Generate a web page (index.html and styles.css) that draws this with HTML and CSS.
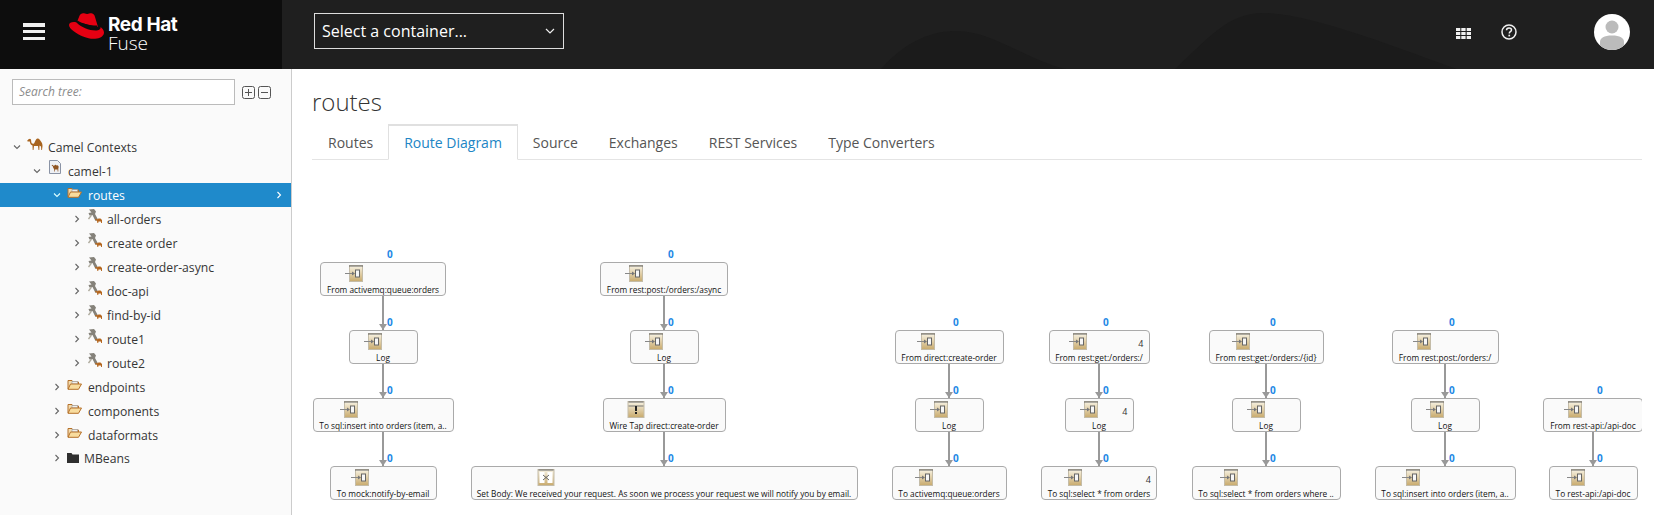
FILE: index.html
```html
<!DOCTYPE html>
<html lang="en">
  <head>
    <meta charset="UTF-8" />
    <title>Red Hat Fuse</title>
    <link rel="stylesheet" href="styles.css">
  </head>
  <body>
    <svg class="defs" width="0" height="0">
      <defs>
        <linearGradient id="gold" x1="0" y1="0" x2="0" y2="1">
          <stop offset="0" stop-color="#f8f3e4"/>
          <stop offset="1" stop-color="#c8aa6c"/>
        </linearGradient>
        <symbol id="i-endpoint" viewBox="0 0 18 17">
          <rect x="4.500" y="0.500" width="13" height="16" fill="url(#gold)" stroke="#c4bca8"/>
          <path d="M4 1h14" stroke="#666" stroke-width="1"/>
          <path d="M0 8.500h9" stroke="#888" stroke-width="1"/>
          <path d="M7 6.500l3 2-3 2z" fill="#777"/>
          <rect x="10.500" y="5" width="4" height="7" fill="#f7f7f7" stroke="#666" stroke-width="1"/>
        </symbol>
        <symbol id="i-wiretap" viewBox="0 0 17 17">
          <rect x="0.500" y="0.500" width="16" height="16" fill="url(#gold)" stroke="#c4bca8"/>
          <path d="M1 1h15" stroke="#666"/>
          <path d="M1 5h15" stroke="#777"/>
          <path d="M8.500 5v5" stroke="#222" stroke-width="2"/>
          <rect x="7.500" y="11" width="2" height="2" fill="#222"/>
        </symbol>
        <symbol id="i-setbody" viewBox="0 0 17 17">
          <rect x="0.500" y="0.500" width="16" height="16" fill="url(#gold)" stroke="#c4bca8"/>
          <path d="M1 1h15" stroke="#666"/>
          <rect x="2" y="3" width="5" height="11" fill="#fff"/>
          <rect x="10" y="3" width="5" height="11" fill="#fff"/>
          <path d="M5.500 6l6 5M11.500 6l-6 5" stroke="#666" stroke-width="1"/>
        </symbol>
        <symbol id="i-camel" viewBox="0 0 16 12">
          <path d="M0 3L1.500 1.200 3 .8 4 1.500 4.300 4C4.500 5.500 5.500 6 7 5.500 8 4.500 8.500 1 10.500.5 12 .2 13 2 14 3.500 15 5 15.500 6 15.500 8L15 12H14.300L14 8.500 12.500 7.500 12.300 12H11.500L11 8H7L6.500 12H5.700L5.500 7.500C4 7 3 6 2.800 3.500H1z" fill="#a8641f"/>
        </symbol>
        <symbol id="i-doc" viewBox="0 0 12 14">
          <path d="M.5.500h8l3 3v10H.5z" fill="#eef0f4" stroke="#8a93a5"/>
          <path d="M2.500 5.500l1.500-.8.500 1.300c.7.200 1.100-1.300 1.900-1.300.5 0 .6.700 1 .7.700-.3 1.600-.2 2 .6.400.7.200 2-.1 2.800v2.600h-.7V9.500H5.700v2.100H5V9C4.300 8.300 4 7.200 3.800 6.300z" fill="#8f5522"/>
        </symbol>
        <symbol id="i-folder" viewBox="0 0 15 11">
          <path d="M1 10V1.500h4l1 1.500h5.500V5" fill="#f3dcae" stroke="#b5702a"/>
          <rect x="5" y="2.500" width="5.500" height="2.500" fill="#eee" stroke="#999" stroke-width=".6"/>
          <path d="M1 10.300L3.500 5h11l-3 5.300z" fill="#f8dc9e" stroke="#b5702a"/>
        </symbol>
        <symbol id="i-route" viewBox="0 0 14 14">
          <path d="M1 .5L6 0 8 2.500 7 5 10 10.500 7.500 12 4.500 6 1.500 6.500 .5 4 3.500 3.500z" fill="#85827a"/>
          <path d="M0.500 10L3.500 6" stroke="#b0ac9f" stroke-width="1.400"/>
          <path d="M7 10.500L8 9.500 9 10.500 10.500 9.500 12.500 9.500 14 11V14H13.200L12.800 12.500H10.500L10.200 14H9.400L9 12 8 11.200z" fill="#b5671f"/>
        </symbol>
        <symbol id="i-blackfolder" viewBox="0 0 12 10">
          <path d="M0 10V0h4.500l1 1.500H12V10z" fill="#2f2f2f"/>
        </symbol>
        <symbol id="c-down" viewBox="0 0 10 10"><path d="M2 3.500l3 3 3-3" fill="none" stroke="currentColor" stroke-width="1.100"/></symbol>
        <symbol id="c-right" viewBox="0 0 10 10"><path d="M3.500 2l3 3-3 3" fill="none" stroke="currentColor" stroke-width="1.100"/></symbol>
      </defs>
    </svg>

    <header class="topbar">
      <div class="brand">
        <button class="burger"><span></span><span></span><span></span></button>
        <svg class="hat" viewBox="0 0 36 26">
          <path d="M8 9L10.500 2.800C11.200 .8 13 0 15 .3L18 1C19.500 1.200 20.500 .2 22.500 .3 24.500 .5 25.500 2 26 4L29 14z" fill="#e60012"/>
          <path d="M8.500 7.500C13 10.500 21 13 28 12.500L29 15.500C22 16.500 12 13.500 7.500 10z" fill="#0d0d0d"/>
          <path d="M7.500 9.500C4 8.500 0 9.500 0 12 0 16 8 21 14 23.500 20 26 24 26 28 25.500 32 25 35 22.500 35 19.500 35 17 33 15 31.500 14 32 16 30 17.500 26.500 17.500 20 17.500 12 14 7.500 9.500z" fill="#e60012"/>
        </svg>
        <div class="brand-text">
          <div class="brand-name">Red Hat</div>
          <div class="brand-product">Fuse</div>
        </div>
      </div>
      <div class="topbar-main">
        <svg class="topbar-bg" viewBox="0 0 1372 69" preserveAspectRatio="none">
          <path d="M599 69C625 40 650 31 675 31 710 31 745 60 784 69z" fill="#1b1b1b"/>
          <path d="M893 69C925 40 945 13 981 13 1030 13 1120 50 1175 69z" fill="#1b1b1b"/>
        </svg>
        <div class="container-select">
          <span>Select a container...</span>
          <svg class="select-caret" viewBox="0 0 10 6"><path d="M1 1l4 4 4-4" fill="none" stroke="#eee" stroke-width="1.200"/></svg>
        </div>
        <div class="topbar-tools">
          <svg class="grid-icon" viewBox="0 0 15 11">
            <path d="M0 0h4.300v3H0zM5.300 0h4.300v3H5.300zM10.700 0H15v3h-4.300zM0 4h4.300v3H0zM5.300 4h4.300v3H5.300zM10.700 4H15v3h-4.300zM0 8h4.300v3H0zM5.300 8h4.300v3H5.300zM10.700 8H15v3h-4.300z" fill="#f0f0f0"/>
          </svg>
          <svg class="help-icon" viewBox="0 0 16 16">
            <circle cx="8" cy="8" r="7" fill="none" stroke="#f0f0f0" stroke-width="1.500"/>
            <path d="M5.500 6.200c0-1.500 1.100-2.300 2.500-2.300s2.500.8 2.500 2.100c0 1.700-2.200 1.700-2.200 3.400" fill="none" stroke="#f0f0f0" stroke-width="1.500"/>
            <rect x="7.400" y="10.700" width="1.700" height="1.700" fill="#f0f0f0"/>
          </svg>
          <svg class="avatar" viewBox="0 0 36 36">
            <defs><clipPath id="avatar-clip"><circle cx="18" cy="18" r="18"/></clipPath></defs>
            <circle cx="18" cy="18" r="18" fill="#fff"/>
            <g clip-path="url(#avatar-clip)" fill="#bbb">
              <circle cx="18" cy="13" r="6.500"/>
              <path d="M6 36v-8c0-4 4-6.500 12-6.500S30 24 30 28v8z"/>
            </g>
          </svg>
        </div>
      </div>
    </header>

    <div class="layout">
      <aside class="sidebar">
        <div class="search-row">
          <div class="search-box">Search tree:</div>
          <svg class="tree-btn" viewBox="0 0 13 13"><rect x=".5" y=".5" width="12" height="12" rx="2" fill="none" stroke="#555"/><path d="M3 6.500h7M6.500 3v7" stroke="#555"/></svg>
          <svg class="tree-btn" viewBox="0 0 13 13"><rect x=".5" y=".5" width="12" height="12" rx="2" fill="none" stroke="#555"/><path d="M3 6.500h7" stroke="#555"/></svg>
        </div>
        <ul class="tree">
          <li class="tree-row lvl0"><svg class="chev"><use href="#c-down"/></svg><svg class="tree-icon camel"><use href="#i-camel"/></svg>Camel Contexts</li>
          <li class="tree-row lvl1"><svg class="chev"><use href="#c-down"/></svg><svg class="tree-icon doc"><use href="#i-doc"/></svg>camel-1</li>
          <li class="tree-row lvl2 selected"><svg class="chev"><use href="#c-down"/></svg><svg class="tree-icon folder"><use href="#i-folder"/></svg>routes<svg class="chev row-arrow"><use href="#c-right"/></svg></li>
          <li class="tree-row lvl3"><svg class="chev"><use href="#c-right"/></svg><svg class="tree-icon route-icon"><use href="#i-route"/></svg>all-orders</li>
          <li class="tree-row lvl3"><svg class="chev"><use href="#c-right"/></svg><svg class="tree-icon route-icon"><use href="#i-route"/></svg>create order</li>
          <li class="tree-row lvl3"><svg class="chev"><use href="#c-right"/></svg><svg class="tree-icon route-icon"><use href="#i-route"/></svg>create-order-async</li>
          <li class="tree-row lvl3"><svg class="chev"><use href="#c-right"/></svg><svg class="tree-icon route-icon"><use href="#i-route"/></svg>doc-api</li>
          <li class="tree-row lvl3"><svg class="chev"><use href="#c-right"/></svg><svg class="tree-icon route-icon"><use href="#i-route"/></svg>find-by-id</li>
          <li class="tree-row lvl3"><svg class="chev"><use href="#c-right"/></svg><svg class="tree-icon route-icon"><use href="#i-route"/></svg>route1</li>
          <li class="tree-row lvl3"><svg class="chev"><use href="#c-right"/></svg><svg class="tree-icon route-icon"><use href="#i-route"/></svg>route2</li>
          <li class="tree-row lvl2"><svg class="chev"><use href="#c-right"/></svg><svg class="tree-icon folder"><use href="#i-folder"/></svg>endpoints</li>
          <li class="tree-row lvl2"><svg class="chev"><use href="#c-right"/></svg><svg class="tree-icon folder"><use href="#i-folder"/></svg>components</li>
          <li class="tree-row lvl2"><svg class="chev"><use href="#c-right"/></svg><svg class="tree-icon folder"><use href="#i-folder"/></svg>dataformats</li>
          <li class="tree-row lvl2 short-row"><svg class="chev"><use href="#c-right"/></svg><svg class="tree-icon blackfolder"><use href="#i-blackfolder"/></svg>MBeans</li>
        </ul>
      </aside>

      <main class="content">
        <h1 class="page-title">routes</h1>
        <nav class="tabs">
          <a class="tab">Routes</a>
          <a class="tab active">Route Diagram</a>
          <a class="tab">Source</a>
          <a class="tab">Exchanges</a>
          <a class="tab">REST Services</a>
          <a class="tab">Type Converters</a>
        </nav>

        <div class="diagram">
          <div class="flow flow-1">
            <div class="node w126"><span class="hits">0</span><svg class="icon"><use href="#i-endpoint"/></svg><div class="node-label">From activemq:queue:orders</div></div>
            <div class="edge"></div>
            <div class="node w69"><span class="hits">0</span><svg class="icon"><use href="#i-endpoint"/></svg><div class="node-label">Log</div></div>
            <div class="edge"></div>
            <div class="node w141"><span class="hits">0</span><svg class="icon"><use href="#i-endpoint"/></svg><div class="node-label">To sql:insert into orders (item, a..</div></div>
            <div class="edge"></div>
            <div class="node w107"><span class="hits">0</span><svg class="icon"><use href="#i-endpoint"/></svg><div class="node-label">To mock:notify-by-email</div></div>
          </div>

          <div class="flow flow-2">
            <div class="node w128"><span class="hits">0</span><svg class="icon"><use href="#i-endpoint"/></svg><div class="node-label">From rest:post:/orders:/async</div></div>
            <div class="edge"></div>
            <div class="node w69"><span class="hits">0</span><svg class="icon"><use href="#i-endpoint"/></svg><div class="node-label">Log</div></div>
            <div class="edge"></div>
            <div class="node w123"><span class="hits">0</span><svg class="icon"><use href="#i-wiretap"/></svg><div class="node-label">Wire Tap direct:create-order</div></div>
            <div class="edge"></div>
            <div class="node w387"><span class="hits">0</span><svg class="icon"><use href="#i-setbody"/></svg><div class="node-label">Set Body: We received your request. As soon we process your request we will notify you by email.</div></div>
          </div>

          <div class="flow flow-3">
            <div class="node w109"><span class="hits">0</span><svg class="icon"><use href="#i-endpoint"/></svg><div class="node-label">From direct:create-order</div></div>
            <div class="edge"></div>
            <div class="node w69"><span class="hits">0</span><svg class="icon"><use href="#i-endpoint"/></svg><div class="node-label">Log</div></div>
            <div class="edge"></div>
            <div class="node w115"><span class="hits">0</span><svg class="icon"><use href="#i-endpoint"/></svg><div class="node-label">To activemq:queue:orders</div></div>
          </div>

          <div class="flow flow-4">
            <div class="node w101"><span class="hits">0</span><span class="count">4</span><svg class="icon"><use href="#i-endpoint"/></svg><div class="node-label">From rest:get:/orders:/</div></div>
            <div class="edge"></div>
            <div class="node w69"><span class="hits">0</span><span class="count">4</span><svg class="icon"><use href="#i-endpoint"/></svg><div class="node-label">Log</div></div>
            <div class="edge"></div>
            <div class="node w116"><span class="hits">0</span><span class="count">4</span><svg class="icon"><use href="#i-endpoint"/></svg><div class="node-label">To sql:select * from orders</div></div>
          </div>

          <div class="flow flow-5">
            <div class="node w115"><span class="hits">0</span><svg class="icon"><use href="#i-endpoint"/></svg><div class="node-label">From rest:get:/orders:/{id}</div></div>
            <div class="edge"></div>
            <div class="node w69"><span class="hits">0</span><svg class="icon"><use href="#i-endpoint"/></svg><div class="node-label">Log</div></div>
            <div class="edge"></div>
            <div class="node w149"><span class="hits">0</span><svg class="icon"><use href="#i-endpoint"/></svg><div class="node-label">To sql:select * from orders where ..</div></div>
          </div>

          <div class="flow flow-6">
            <div class="node w107"><span class="hits">0</span><svg class="icon"><use href="#i-endpoint"/></svg><div class="node-label">From rest:post:/orders:/</div></div>
            <div class="edge"></div>
            <div class="node w69"><span class="hits">0</span><svg class="icon"><use href="#i-endpoint"/></svg><div class="node-label">Log</div></div>
            <div class="edge"></div>
            <div class="node w141"><span class="hits">0</span><svg class="icon"><use href="#i-endpoint"/></svg><div class="node-label">To sql:insert into orders (item, a..</div></div>
          </div>

          <div class="flow flow-7">
            <div class="node w100"><span class="hits">0</span><svg class="icon"><use href="#i-endpoint"/></svg><div class="node-label">From rest-api:/api-doc</div></div>
            <div class="edge"></div>
            <div class="node w89"><span class="hits">0</span><svg class="icon"><use href="#i-endpoint"/></svg><div class="node-label">To rest-api:/api-doc</div></div>
          </div>
        </div>
      </main>
    </div>
  </body>
</html>
```

FILE: styles.css
```css
* {
  box-sizing: border-box;
}
html,
body {
  margin: 0;
  height: 515px;
  overflow: hidden;
}
body {
  font-family: "Open Sans", sans-serif;
  color: #363636;
  background: #fff;
}
.defs {
  position: absolute;
}

/* top bar */
.topbar {
  display: flex;
  height: 69px;
  background: #1f1f1f;
}
.brand {
  display: flex;
  align-items: flex-start;
  width: 282px;
  background: #0d0d0d;
  flex-shrink: 0;
}
.burger {
  display: flex;
  flex-direction: column;
  justify-content: space-between;
  width: 22px;
  height: 17px;
  margin: 23px 0 0 23px;
  padding: 0;
  border: none;
  background: none;
}
.burger span {
  height: 3.5px;
  background: #f0f0f0;
}
.hat {
  width: 36px;
  height: 26px;
  margin: 13px 0 0 24px;
}
.brand-text {
  margin: 15px 0 0 3px;
  color: #fff;
}
.brand-name {
  font-family: "Inter", sans-serif;
  font-size: 19px;
  font-weight: 700;
  line-height: 20px;
  letter-spacing: -0.4px;
}
.brand-product {
  font-size: 19px;
  line-height: 17px;
  font-weight: 300;
}
.topbar-main {
  position: relative;
  display: flex;
  flex: 1;
  align-items: flex-start;
  justify-content: space-between;
}
.topbar-bg {
  position: absolute;
  left: 0;
  top: 0;
  width: 100%;
  height: 100%;
}
.container-select {
  position: relative;
  display: flex;
  align-items: center;
  justify-content: space-between;
  width: 250px;
  height: 36px;
  margin: 13px 0 0 32px;
  padding: 0 8px 0 7px;
  border: 1px solid #ddd;
  background: #1f1f1f;
  color: #fff;
  font-size: 16px;
}
.select-caret {
  width: 10px;
  height: 6px;
}
.topbar-tools {
  position: relative;
  display: flex;
  align-items: flex-start;
  margin-right: 24px;
}
.grid-icon {
  width: 15px;
  height: 11px;
  margin-top: 28px;
}
.help-icon {
  width: 16px;
  height: 16px;
  margin: 24px 0 0 30px;
}
.avatar {
  width: 36px;
  height: 36px;
  margin: 14px 0 0 77px;
}

/* layout */
.layout {
  display: flex;
  height: 446px;
}

/* tree */
.sidebar {
  width: 292px;
  flex-shrink: 0;
  background: #fafafa;
  border-right: 1px solid #ccc;
}
.search-row {
  display: flex;
  align-items: center;
  padding: 10px 0 0 12px;
}
.search-box {
  width: 223px;
  height: 26px;
  padding-left: 6px;
  border: 1px solid #bbb;
  background: #fff;
  color: #8c8c8c;
  font-size: 12px;
  font-style: italic;
  line-height: 24px;
}
.tree-btn {
  width: 13px;
  height: 13px;
  margin-left: 3px;
}
.tree-btn:first-of-type {
  margin-left: 7px;
}
.tree {
  margin: 30px 0 0;
  padding: 0;
  list-style: none;
}
.tree-row {
  position: relative;
  display: flex;
  align-items: center;
  height: 24px;
  font-size: 12.2px;
  white-space: nowrap;
}
.short-row {
  height: 22px;
}
.lvl0 { padding-left: 12px; }
.lvl1 { padding-left: 32px; }
.lvl2 { padding-left: 52px; }
.lvl3 { padding-left: 72px; }
.selected {
  background: #1f8acb;
  color: #fff;
}
.chev {
  width: 10px;
  height: 10px;
  margin-right: 5px;
  flex-shrink: 0;
  color: #666;
}
.selected .chev {
  color: #dff;
}
.row-arrow {
  position: absolute;
  right: 7px;
  margin: 0;
  color: #fff !important;
}
.tree-icon {
  width: 16px;
  height: 14px;
  margin-right: 5px;
  margin-top: -6px;
  flex-shrink: 0;
}
.camel {
  height: 12px;
}
.doc {
  width: 12px;
  margin-left: 2px;
  margin-right: 7px;
  margin-top: -8px;
}
.folder {
  width: 15px;
  height: 11px;
  margin-right: 6px;
  margin-top: -5px;
}
.route-icon {
  margin-left: 1px;
  margin-right: 5px;
  width: 14px;
  height: 14px;
  margin-top: -7px;
}
.blackfolder {
  width: 12px;
  height: 10px;
  margin-top: -1px;
}

/* main */
.content {
  position: relative;
  flex: 1;
  padding: 0 12px 0 20px;
  min-width: 0;
}
.page-title {
  margin: 15px 0 0;
  font-size: 24px;
  font-weight: 300;
  line-height: 36px;
  color: #333;
}
.tabs {
  display: flex;
  height: 36px;
  margin-top: 4px;
  padding-left: 0.5px;
  border-bottom: 1px solid #e4e4e4;
}
.tab {
  height: 36px;
  padding: 0 14.5px;
  border: 1px solid transparent;
  font-size: 14px;
  line-height: 35px;
  color: #555;
}
.active {
  margin: 0 -1px;
  padding: 0 15.5px;
  border-color: #e0e0e0;
  border-bottom-color: #fff;
  border-top-width: 2px;
  line-height: 34px;
  background: #fff;
  color: #2185c5;
}

/* route diagram, nodes sit on a free canvas */
.diagram {
  position: absolute;
  left: 20px;
  top: 91px;
  width: 1330px;
  height: 355px;
  overflow: hidden;
}
.flow {
  position: absolute;
  display: flex;
  flex-direction: column;
  align-items: center;
  width: 0;
}
/* x is the centre line of the flow, y is measured from .diagram */
.flow-1 { left: 71px; top: 102px; }
.flow-2 { left: 352px; top: 102px; }
.flow-3 { left: 637px; top: 170px; }
.flow-4 { left: 787px; top: 170px; }
.flow-5 { left: 954px; top: 170px; }
.flow-6 { left: 1133px; top: 170px; }
.flow-7 { left: 1281px; top: 238px; }
.node {
  position: relative;
  flex-shrink: 0;
  height: 34px;
  padding-top: 2px;
  border: 1px solid #aaa;
  border-radius: 4px;
  background: #fafafa;
}
.w69 { width: 69px; }
.w89 { width: 89px; }
.w100 { width: 100px; }
.w101 { width: 101px; }
.w107 { width: 107px; }
.w109 { width: 109px; }
.w115 { width: 115px; }
.w116 { width: 116px; }
.w123 { width: 123px; }
.w126 { width: 126px; }
.w128 { width: 128px; }
.w141 { width: 141px; }
.w149 { width: 149px; }
.w387 { width: 387px; }
.icon {
  display: block;
  width: 18px;
  height: 17px;
  margin-left: calc(16% + 4px);
}
.node-label {
  margin-top: 3px;
  font-size: 8.3px;
  line-height: 10px;
  color: #111;
  text-align: center;
  white-space: nowrap;
}
.hits {
  position: absolute;
  left: 50%;
  top: -15px;
  margin-left: 4px;
  font-size: 10px;
  font-weight: 700;
  line-height: 12px;
  color: #1e88e5;
}
.count {
  position: absolute;
  right: 5px;
  top: 7px;
  font-size: 9px;
  line-height: 12px;
  color: #333;
}
.edge {
  position: relative;
  flex-shrink: 0;
  width: 2px;
  height: 34px;
  background: #999;
}
.edge::after {
  content: "";
  position: absolute;
  left: -3px;
  bottom: 0;
  border-left: 4px solid transparent;
  border-right: 4px solid transparent;
  border-top: 6px solid #999;
}
```
